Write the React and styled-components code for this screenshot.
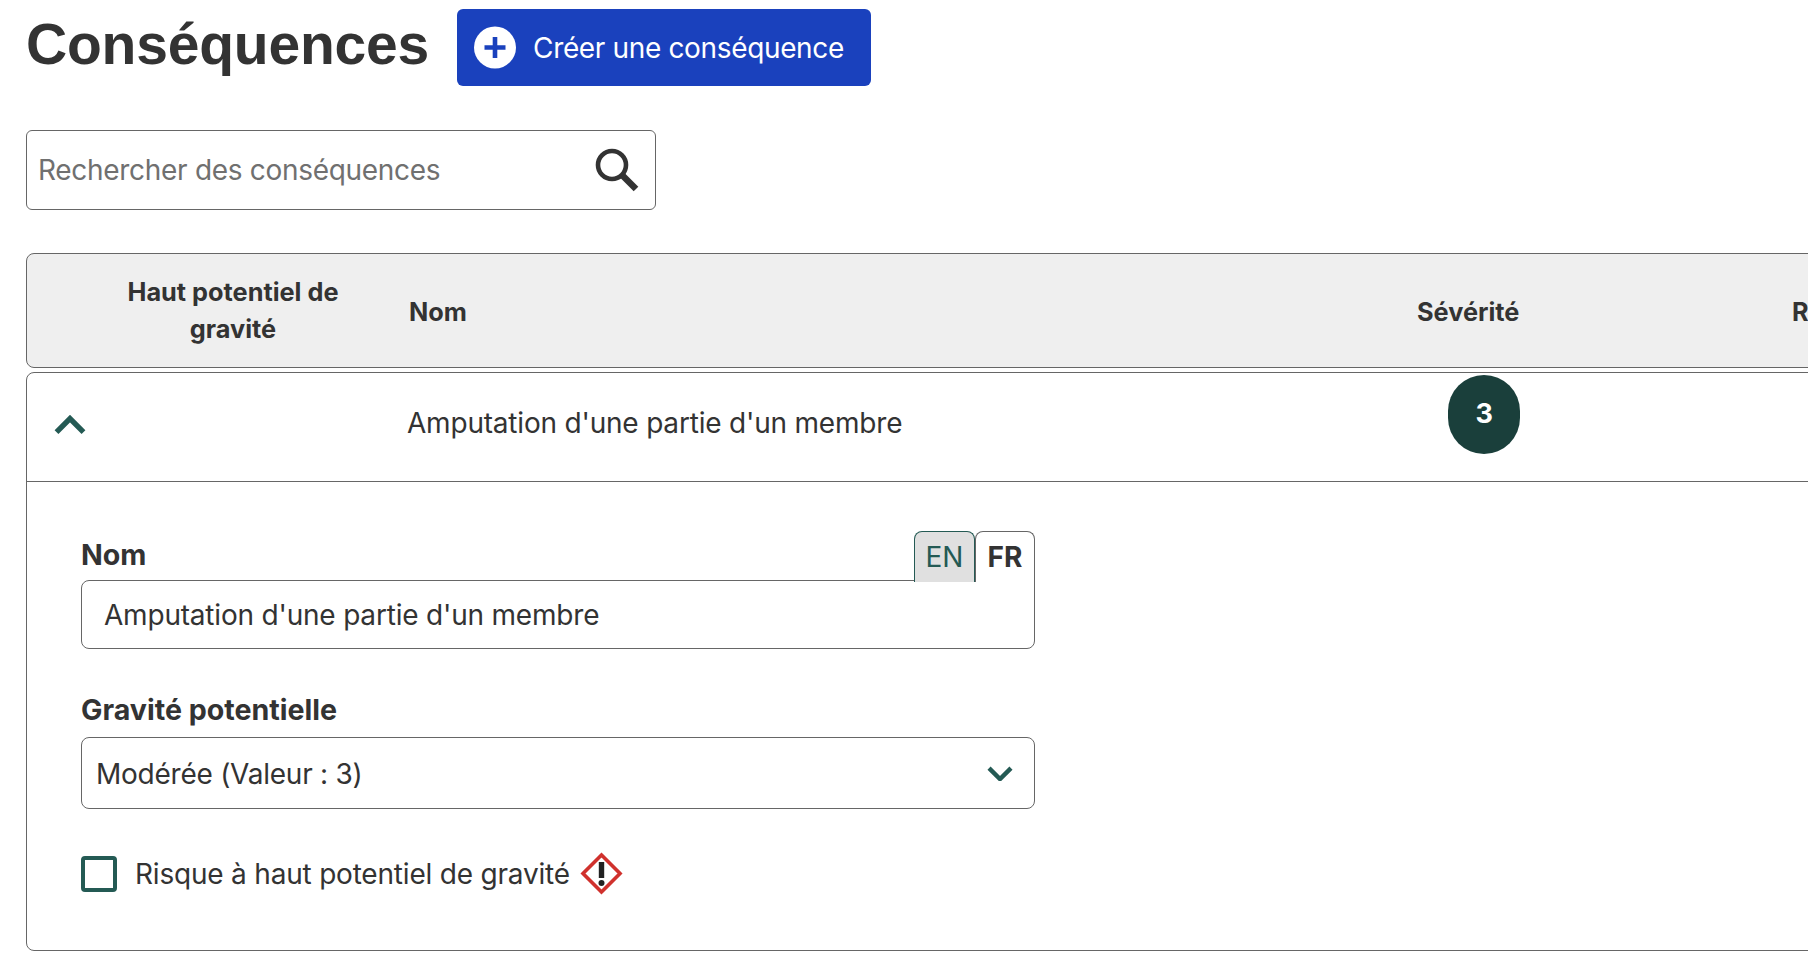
import styled, { createGlobalStyle } from "styled-components";

const GlobalStyle = createGlobalStyle`
  html, body {
    margin: 0;
    padding: 0;
    background: #fff;
    overflow: hidden;
  }
  body {
    font-family: Inter, "Liberation Sans", sans-serif;
    color: #333;
  }
`;

const Page = styled.main`
  width: 1900px;
  height: 954px;
  padding: 9px 0 0 26px;
  box-sizing: border-box;
`;

const TitleRow = styled.div`
  display: flex;
  align-items: flex-start;
  gap: 28px;
`;

const Title = styled.h1`
  margin: 0;
  font: bold 57px/70px "Liberation Sans", Arial, sans-serif;
  color: #333;
  letter-spacing: -0.2px;
`;

const CreateButton = styled.button`
  display: flex;
  align-items: center;
  gap: 17px;
  width: 414px;
  height: 77px;
  padding: 0 0 0 17px;
  border: 0;
  border-radius: 6px;
  background: #1a41bd;
  color: #fff;
  font: 400 28px Inter, sans-serif;
  letter-spacing: -0.35px;
`;

const SearchBox = styled.div`
  display: flex;
  align-items: center;
  justify-content: space-between;
  box-sizing: border-box;
  width: 630px;
  height: 80px;
  margin-top: 44px;
  padding: 0 16px 0 11px;
  border: 1px solid #666;
  border-radius: 6px;
  font-size: 28px;
  letter-spacing: -0.3px;
  color: #707070;
`;

const tracks = "100px 212px 1078px 375px 1fr";

const HeadRow = styled.div`
  display: grid;
  grid-template-columns: ${tracks};
  align-items: center;
  box-sizing: border-box;
  height: 115px;
  margin-top: 43px;
  border: 1px solid #666;
  border-radius: 8px;
  background: #efefef;
  font-size: 25.3px;
  font-weight: 700;
  line-height: 37px;
`;

const HeadCell = styled.div`
  text-align: ${(p) => (p.$center ? "center" : "left")};
  padding: ${(p) => (p.$center ? "0 0 2px" : "2px 0 0")};
  padding-left: ${(p) => p.$inset || 0}px;
`;

const Card = styled.section`
  box-sizing: border-box;
  height: 579px;
  margin-top: 4px;
  border: 1px solid #666;
  border-radius: 8px;
`;

const Row = styled.div`
  display: grid;
  grid-template-columns: ${tracks};
  align-items: center;
  box-sizing: border-box;
  height: 109px;
  border-bottom: 1px solid #666;
  font-size: 28px;
  letter-spacing: -0.2px;
`;

const Toggle = styled.div`
  display: flex;
  padding: 0 0 4px 27px;
`;

const RowName = styled.div`
  grid-column: 3;
  padding: 0 0 8px 68px;
`;

const Badge = styled.div`
  display: flex;
  align-items: center;
  justify-content: center;
  align-self: start;
  width: 72px;
  height: 79px;
  margin: 2px 0 0 31px;
  padding-bottom: 2px;
  box-sizing: border-box;
  border-radius: 36px;
  background: #1a3f3b;
  color: #fff;
  font-size: 27px;
  font-weight: 700;
`;

const Panel = styled.div`
  width: 954px;
  padding: 49px 0 0 54px;
`;

const LabelRow = styled.div`
  display: flex;
  align-items: flex-end;
  justify-content: space-between;
  height: 51px;
  margin-bottom: -2px;
`;

const Label = styled.div`
  font-size: 28.6px;
  font-weight: 700;
  line-height: 36px;
  margin-bottom: ${(p) => p.$gap}px;
`;

const Tabs = styled.div`
  display: flex;
  position: relative;
  z-index: 1;
`;

const Tab = styled.div`
  display: flex;
  align-items: center;
  justify-content: center;
  box-sizing: border-box;
  width: ${(p) => (p.$active ? 60 : 61)}px;
  height: 51px;
  padding-bottom: 1px;
  border: 1px solid ${(p) => (p.$active ? "#666" : "#245a54")};
  border-bottom: 0;
  border-radius: 8px 8px 0 0;
  background: ${(p) => (p.$active ? "#fff" : "#e0e0e0")};
  color: ${(p) => (p.$active ? "#333" : "#245a54")};
  font-size: 28px;
  font-weight: ${(p) => (p.$active ? 700 : 400)};
`;

const TextInput = styled.div`
  display: flex;
  align-items: center;
  box-sizing: border-box;
  height: 69px;
  margin-bottom: 43px;
  padding-left: 22px;
  border: 1px solid #666;
  border-radius: 8px;
  border-top-right-radius: 0;
  font-size: 28px;
  letter-spacing: -0.2px;
`;

const SelectBox = styled.div`
  display: flex;
  align-items: center;
  justify-content: space-between;
  box-sizing: border-box;
  height: 72px;
  padding: 1px 21px 0 14px;
  border: 1px solid #666;
  border-radius: 8px;
  font-size: 28px;
  letter-spacing: -0.25px;
`;

const CheckRow = styled.label`
  display: flex;
  align-items: center;
  margin-top: 43px;
  font-size: 28px;
  letter-spacing: -0.2px;
`;

const CheckBox = styled.span`
  box-sizing: border-box;
  width: 36px;
  height: 36px;
  margin-right: 18px;
  border: 4.5px solid #245a54;
  border-radius: 4px;
`;

const WarnIcon = styled.svg`
  margin-left: 10px;
`;

const PlusIcon = () => (
  <svg width="42" height="43" viewBox="0 0 42 43">
    <circle cx="21" cy="21.5" r="21" fill="#fff" />
    <path d="M21 11v21M10.5 21.5h21" stroke="#1a41bd" strokeWidth="4.6" />
  </svg>
);

const SearchIcon = () => (
  <svg width="44" height="44" viewBox="0 0 44 44" fill="none" stroke="#333">
    <circle cx="17" cy="17" r="14" strokeWidth="4.6" />
    <path d="M27.5 27.5L41 41" strokeWidth="6.5" />
  </svg>
);

const Chevron = ({ up, width = 32 }) => (
  <svg width={width} height={width * 0.6} viewBox="0 0 32 19" fill="none">
    <path
      d={up ? "M2.5 17L16 3.5 29.5 17" : "M2.5 2.5L16 16 29.5 2.5"}
      stroke="#245a54"
      strokeWidth="5.4"
    />
  </svg>
);

function App() {
  return (
    <Page>
      <GlobalStyle />
      <TitleRow>
        <Title>Conséquences</Title>
        <CreateButton>
          <PlusIcon />
          Créer une conséquence
        </CreateButton>
      </TitleRow>

      <SearchBox>
        Rechercher des conséquences
        <SearchIcon />
      </SearchBox>

      <HeadRow>
        <span />
        <HeadCell $center>Haut potentiel de gravité</HeadCell>
        <HeadCell $inset={70}>Nom</HeadCell>
        <HeadCell>Sévérité</HeadCell>
        <HeadCell>Risques</HeadCell>
      </HeadRow>

      <Card>
        <Row>
          <Toggle>
            <Chevron up />
          </Toggle>
          <RowName>Amputation d'une partie d'un membre</RowName>
          <Badge>3</Badge>
        </Row>

        <Panel>
          <LabelRow>
            <Label $gap={9}>Nom</Label>
            <Tabs>
              <Tab>EN</Tab>
              <Tab $active>FR</Tab>
            </Tabs>
          </LabelRow>
          <TextInput>Amputation d'une partie d'un membre</TextInput>

          <Label $gap={9}>Gravité potentielle</Label>
          <SelectBox>
            Modérée (Valeur : 3)
            <Chevron width={26} />
          </SelectBox>

          <CheckRow>
            <CheckBox />
            Risque à haut potentiel de gravité
            <WarnIcon width="43" height="43" viewBox="0 0 43 43">
              <path
                d="M21.5 3L40 21.5 21.5 40 3 21.5z"
                fill="#fff"
                stroke="#d0312d"
                strokeWidth="3.6"
              />
              <path d="M21.5 10v16" stroke="#222" strokeWidth="5.4" />
              <circle cx="21.5" cy="31" r="3" fill="#222" />
            </WarnIcon>
          </CheckRow>
        </Panel>
      </Card>
    </Page>
  );
}

export default App;
